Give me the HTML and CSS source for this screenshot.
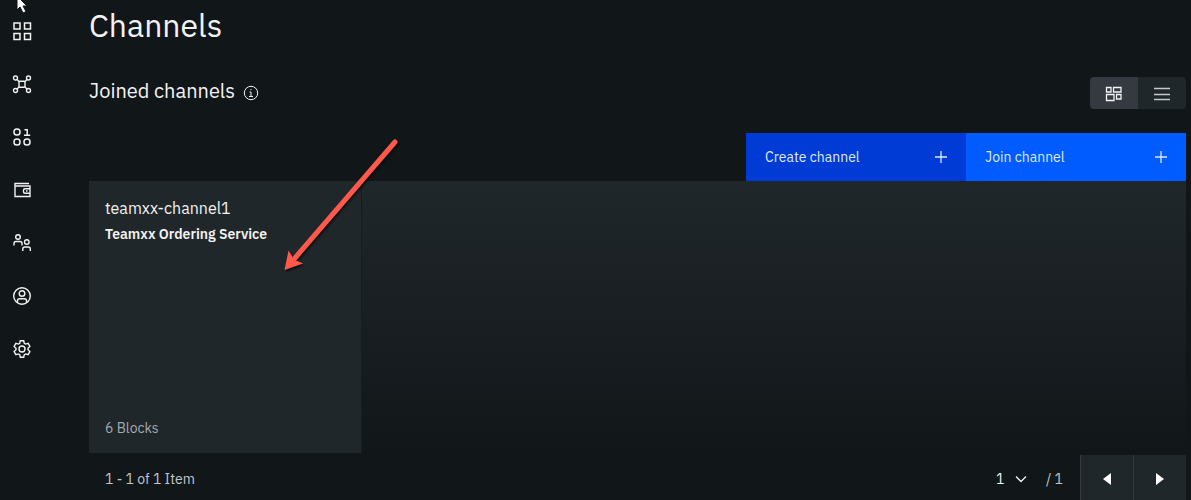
FILE: index.html
```html
<!DOCTYPE html>
<html lang="en">
<head>
<meta charset="utf-8">
<meta name="viewport" content="width=device-width, initial-scale=1">
<title>Channels</title>
<link rel="stylesheet" href="styles.css">
</head>
<body>
<div class="app">
  <nav class="rail" aria-label="Main">
    <a class="rail-link" href="#nodes" aria-label="Nodes"><svg viewBox="0 0 20 20" class="icon"><path d="M2 2h6v6H2zM12.500 2h6v6h-6zM2 12.500h6v6H2zM12.500 12.500h6v6h-6z" stroke-width="1.500"/></svg></a>
    <a class="rail-link" href="#channels" aria-label="Channels"><svg viewBox="0 0 20 20" class="icon"><circle cx="3.500" cy="4" r="2"/><circle cx="16.500" cy="4" r="2"/><circle cx="3.500" cy="16.500" r="2"/><circle cx="16.500" cy="16.500" r="2"/><rect x="7" y="7.300" width="6" height="6" rx="1"/><path d="M5 5.500l2.300 2.300M15 5.500l-2.300 2.300M5 15l2.300-2.300M15 15l-2.300-2.300"/></svg></a>
    <a class="rail-link" href="#contracts" aria-label="Smart contracts"><svg viewBox="0 0 20 20" class="icon"><g stroke-width="1.500"><rect x="2" y="2" width="6" height="6" rx="2.800"/><rect x="2" y="12" width="6" height="6" rx="2.800"/><rect x="12" y="12" width="6" height="6" rx="2.800"/><path d="M12.500 2.800h2.700v5.200M12 8.200h6.200"/></g></svg></a>
    <a class="rail-link" href="#wallet" aria-label="Wallet"><svg viewBox="0 0 20 20" class="icon"><path d="M17 3.500H3v13h15V6H3M18 8.700h-5q-1.500 0-1.500 1.500v1.500q0 1.500 1.500 1.500h5M14 11h1.500"/></svg></a>
    <a class="rail-link" href="#organizations" aria-label="Organizations"><svg viewBox="0 0 20 20" class="icon"><circle cx="6" cy="4" r="2.300"/><path d="M2 12.500v-2q0-2 2-2h4q2 0 2 2v2M10.800 18v-2q0-2 2-2h3.500q2 0 2 2v2"/><circle cx="14.800" cy="9" r="2.300"/></svg></a>
    <a class="rail-link" href="#users" aria-label="Users"><svg viewBox="0 0 20 20" class="icon"><circle cx="10" cy="10" r="8.300"/><circle cx="10" cy="7.500" r="2.800"/><path d="M5.500 16.500v-1.800q0-2 2-2h5q2 0 2 2v1.800"/></svg></a>
    <a class="rail-link" href="#settings" aria-label="Settings"><svg viewBox="0 0 20 20" class="icon"><path d="M8.300 1.800h3.400l.6 2.500 1.300.8 2.500-.8 1.800 3.100-1.900 1.800v1.600l1.900 1.800-1.800 3.100-2.500-.8-1.300.8-.6 2.500H8.300l-.6-2.500-1.300-.8-2.500.8-1.800-3.100L4 10.800V9.200L2.100 7.400l1.800-3.100 2.500.8 1.300-.8z"/><circle cx="10" cy="10" r="3"/></svg></a>
  </nav>

  <main class="content">
    <h1 class="page-title">Channels</h1>
    <header class="section-header">
      <h2 class="section-title">Joined channels</h2>
      <button class="info" type="button" aria-label="About joined channels"><svg viewBox="0 0 16 16" class="info-icon"><circle cx="8" cy="8" r="6.700"/><path d="M6.500 7H8v4.300M6 11.500h4M7.500 4.500h1"/></svg></button>
      <div class="view-switch">
        <button class="view-button view-active" type="button" aria-label="Tile view"><svg viewBox="0 0 18 18" class="view-icon"><path d="M1.500 2.500h4.500v4.500H1.500zM8.500 2.500h7.500v4.500H8.500zM1.500 9.500h7.500v6H1.500zM11.500 9.500h4.500v4.500h-4.500z"/></svg></button>
        <button class="view-button" type="button" aria-label="List view"><svg viewBox="0 0 18 18" class="view-icon"><path d="M1 3.500h16M1 9.500h16M1 14.500h16"/></svg></button>
      </div>
    </header>
    <div class="actions">
      <button class="action action-create" type="button">Create channel<svg viewBox="0 0 14 14" class="plus"><path d="M7 1v12M1 7h12"/></svg></button>
      <button class="action action-join" type="button">Join channel<svg viewBox="0 0 14 14" class="plus"><path d="M7 1v12M1 7h12"/></svg></button>
    </div>
    <section class="tiles" aria-label="Joined channels">
      <a class="tile" href="#teamxx-channel1">
        <span class="tile-name">teamxx-channel1</span>
        <strong class="tile-service">Teamxx Ordering Service</strong>
        <span class="tile-blocks">6 Blocks</span>
      </a>
    </section>
    <footer class="pagination">
      <span class="range">1 - 1 of 1 Item</span>
      <label class="page-picker">
        <select class="page-select" aria-label="Page"><option>1</option></select>
        <svg viewBox="0 0 12 8" class="chevron"><path d="M1 1.500l5 5 5-5"/></svg>
      </label>
      <span class="page-total">/ 1</span>
      <button class="page-button" type="button" aria-label="Previous page"><svg viewBox="0 0 8 12" class="caret"><path d="M8 0v12L0 6z"/></svg></button>
      <button class="page-button" type="button" aria-label="Next page"><svg viewBox="0 0 8 12" class="caret"><path d="M0 0v12l8-6z"/></svg></button>
    </footer>
  </main>
</div>
<svg class="arrow" viewBox="0 0 124 144" aria-hidden="true"><path class="arrow-line" d="M115 12L15 128"/><path class="arrow-head" d="M4.500 140L8.500 120.500l5.500 9 9 4z"/></svg>
<svg class="cursor" viewBox="0 0 12 14" aria-hidden="true"><path d="M1-4v14l3-3 3 6 3-1.500-3-5.500h4z"/></svg>
</body>
</html>
```
FILE: styles.css
```css
* { box-sizing: border-box; }

body {
  margin: 0;
  background: #111619;
  color: #f3f3f3;
  font-family: "IBM Plex Sans", Roboto, "Noto Sans", sans-serif;
  font-size: 14px;
  line-height: 20px;
  overflow: hidden;
}

button, select {
  border: 0;
  padding: 0;
  background: transparent;
  color: inherit;
  font: inherit;
  cursor: pointer;
}

a { color: inherit; text-decoration: none; }

svg { display: block; fill: none; stroke: currentColor; }

.app { display: flex; min-height: 100vh; }

.rail {
  flex: none;
  display: flex;
  flex-direction: column;
  gap: 33px;
  width: 89px;
  padding: 21px 0 0 12px;
}

.rail-link { width: 20px; height: 20px; }

.icon { width: 20px; height: 20px; stroke-width: 1.4; }

.content {
  flex: 1;
  display: flex;
  flex-direction: column;
  min-width: 0;
  padding: 5px 5px 0 0;
}

.page-title {
  margin: 0;
  font-size: 32px;
  font-weight: 400;
  line-height: 40px;
}

.section-header {
  display: flex;
  align-items: center;
  margin-top: 32px;
}

.section-title {
  margin: 0;
  padding-bottom: 4px;
  font-size: 20px;
  font-weight: 400;
  line-height: 28px;
}

.info { margin-left: 8px; }

.info-icon { width: 16px; height: 16px; }

.view-switch {
  display: flex;
  margin-left: auto;
  border-radius: 4px;
  overflow: hidden;
}

.view-button {
  display: grid;
  place-items: center;
  width: 48px;
  height: 32px;
  padding-top: 2px;
  background: #20272a;
  color: #c1c7cd;
}

.view-active { background: #343a3f; color: #f2f4f8; }

.view-icon { width: 18px; height: 18px; stroke-width: 1.3; }

.actions { display: flex; justify-content: flex-end; margin-top: 24px; }

.action {
  display: flex;
  align-items: center;
  justify-content: space-between;
  width: 220px;
  height: 48px;
  padding: 0 18px 0 19px;
  color: #dce8ff;
}

.action-create { background: #003bd5; }

.action-join { background: #005cff; }

.plus { width: 14px; height: 14px; stroke-width: 1.3; }

.tiles {
  display: flex;
  background: linear-gradient(#20272a, #111619);
}

.tile {
  display: flex;
  flex-direction: column;
  width: 272px;
  height: 272px;
  padding: 15px 16px 16px;
  background: #20272a;
  box-shadow: 1px 0 #171c1f;
}

.tile-name { font-size: 16px; line-height: 24px; }

.tile-service { margin-top: 4px; font-weight: 600; }

.tile-blocks { margin-top: auto; color: #a2a9b0; line-height: 18px; }

.pagination {
  display: flex;
  align-items: center;
  margin-top: 2px;
  padding-left: 16px;
  color: #c1c7cd;
}

.range { margin-right: auto; }

.page-picker { display: flex; align-items: center; color: #f2f4f8; }

.page-select { appearance: none; width: 19px; outline: 0; }

.page-select option { color: #111619; }

.chevron { width: 12px; height: 8px; stroke-width: 1.3; }

.page-total { margin: 0 17px 0 19px; }

.page-button {
  display: grid;
  place-items: center;
  width: 53px;
  height: 48px;
  border-left: 1px solid #343a3f;
  background: #20272a;
  color: #fff;
}

.caret { width: 8px; height: 12px; fill: currentColor; stroke: none; }

.arrow {
  position: absolute;
  top: 130px;
  left: 280px;
  width: 124px;
  height: 144px;
  overflow: visible;
  filter: drop-shadow(1px 2px 1px #0009);
  pointer-events: none;
}

.arrow-line { stroke: #ff594c; stroke-width: 5; stroke-linecap: round; }

.arrow-head { fill: #ff594c; stroke: none; }

.cursor {
  position: absolute;
  top: 0;
  left: 16px;
  width: 12px;
  height: 14px;
  fill: #fff;
  stroke: #111619;
  pointer-events: none;
}
```
